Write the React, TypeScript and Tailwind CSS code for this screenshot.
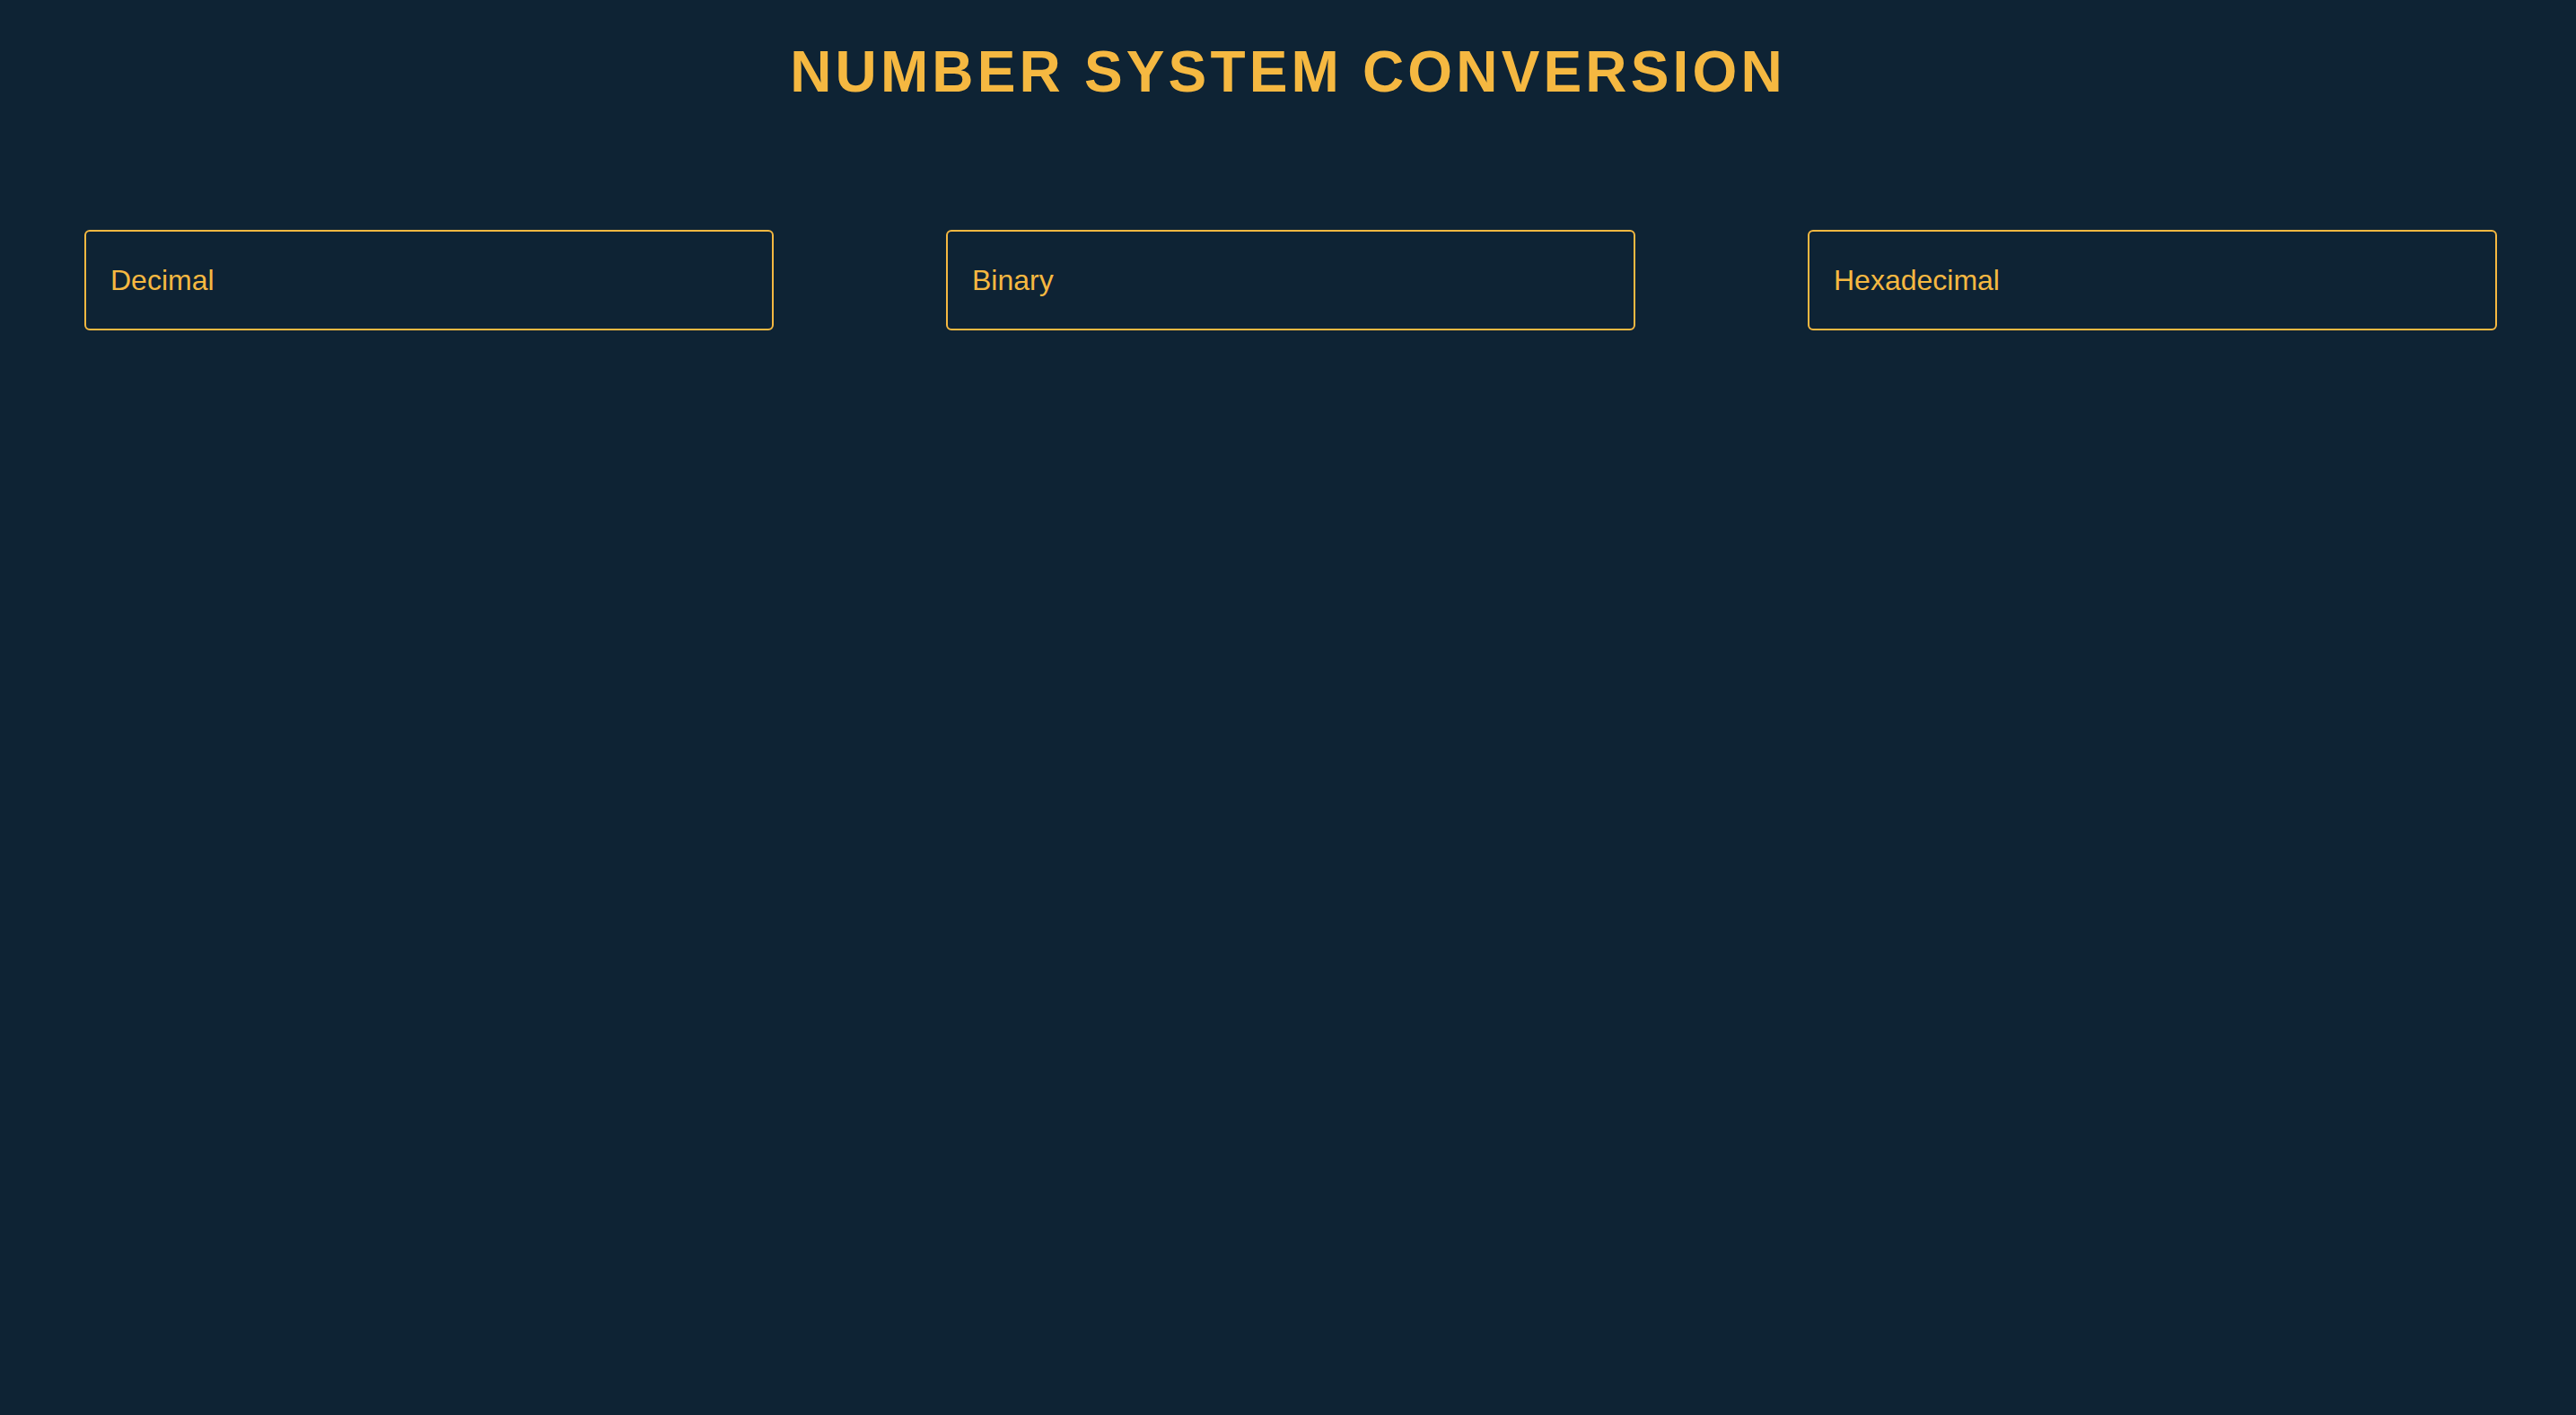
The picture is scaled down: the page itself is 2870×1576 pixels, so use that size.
import React from "react";

export default function App() {
  const fields = ["Decimal", "Binary", "Hexadecimal"];
  return (
    <div
      className="min-h-screen w-full bg-[#0e2334] flex flex-col"
      style={{ fontFamily: '"Liberation Sans", Arial, sans-serif' }}
    >
      <h1 className="pt-[48px] text-center text-[64px] leading-none font-bold tracking-[0.065em] text-[#f5b841]">
        NUMBER SYSTEM CONVERSION
      </h1>
      <div className="mt-[144px] flex pl-[94px] gap-[192px]">
        {fields.map((f) => (
          <input
            key={f}
            type="text"
            placeholder={f}
            className="w-[768px] h-[112px] rounded-md border-2 border-[#f5b841] bg-transparent px-[27px] text-[32px] text-[#f5b841] placeholder:text-[#f5b841] outline-none"
          />
        ))}
      </div>
    </div>
  );
}
